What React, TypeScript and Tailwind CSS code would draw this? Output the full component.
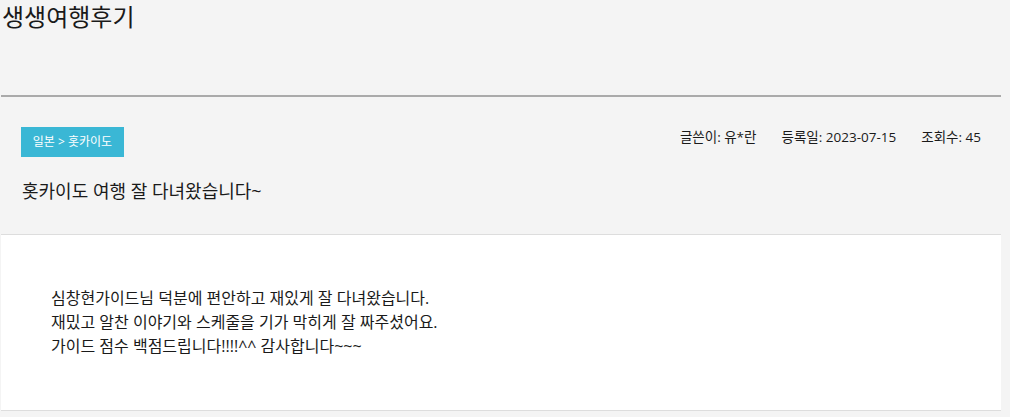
export default function App() {
  return (
    <div className="min-h-screen bg-[#f4f4f4] text-[#1a1a1a] font-['Open_Sans','Noto_Sans_CJK_KR',sans-serif]">
      <div className="w-[1000px] ml-px">
        {/* Page title */}
        <h1 className="pl-px text-[24px] leading-[34px] font-normal">생생여행후기</h1>
        <div className="mt-[61px] h-[2px] bg-[#aaaaaa]" />

        {/* Post header */}
        <div className="px-5 pt-[30px] pb-[31px]">
          <div className="flex items-start justify-between">
            <span className="flex h-[30px] w-[103px] items-center justify-center bg-[#3ab7d5] text-[12px] text-white">
              일본 &gt; 홋카이도
            </span>
            <div className="flex gap-[25px] text-[13.5px] leading-[20px]">
              <span>글쓴이: 유*란</span>
              <span>등록일: 2023-07-15</span>
              <span>조회수: 45</span>
            </div>
          </div>
          <h2 className="mt-[22px] pl-px text-[18px] leading-[24px] font-normal">
            홋카이도 여행 잘 다녀왔습니다~
          </h2>
        </div>

        {/* Post body */}
        <div className="border-y border-[#dddddd] bg-white pt-[51px] pb-[52px] pl-[50px] text-[16px] leading-[24px]">
          <p>심창현가이드님 덕분에 편안하고 재있게 잘 다녀왔습니다.</p>
          <p>재밌고 알찬 이야기와 스케줄을 기가 막히게 잘 짜주셨어요.</p>
          <p>가이드 점수 백점드립니다!!!!^^ 감사합니다~~~</p>
        </div>
      </div>
    </div>
  );
}
